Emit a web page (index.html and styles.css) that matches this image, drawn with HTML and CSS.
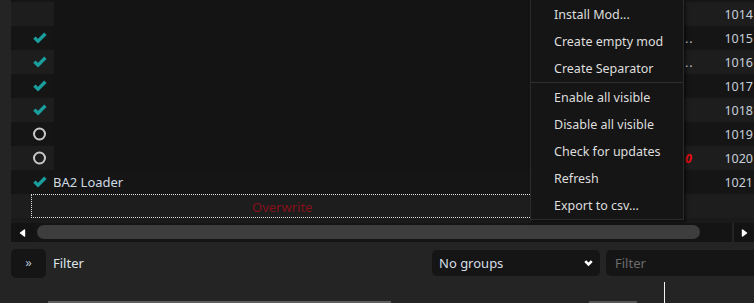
FILE: index.html
```html
<!DOCTYPE html>
<html>
<head>
<meta charset="utf-8">
<link rel="stylesheet" href="styles.css">
</head>
<body>
<div class="app">
  <div class="table">
    <div class="row dark partial"><div class="cell"></div><div class="cell"></div><div class="cell blank"></div><div class="cell"></div><div class="cell"></div></div>
    <div class="row light"><div class="cell"></div><div class="cell"></div><div class="cell blank"></div><div class="cell"></div><div class="cell num">1014</div></div>
    <div class="row dark"><div class="cell"></div><div class="cell check"><svg width="14" height="12" viewBox="0 0 14 12"><path d="M1.4 5.6 L5 9.2 L12.4 1.8" fill="none" stroke="#1a9d9d" stroke-width="3.4"/></svg></div><div class="cell blank"></div><div class="cell flag">..</div><div class="cell num">1015</div></div>
    <div class="row light"><div class="cell"></div><div class="cell check"><svg width="14" height="12" viewBox="0 0 14 12"><path d="M1.4 5.6 L5 9.2 L12.4 1.8" fill="none" stroke="#1a9d9d" stroke-width="3.4"/></svg></div><div class="cell blank"></div><div class="cell flag">..</div><div class="cell num">1016</div></div>
    <div class="row dark"><div class="cell"></div><div class="cell check"><svg width="14" height="12" viewBox="0 0 14 12"><path d="M1.4 5.6 L5 9.2 L12.4 1.8" fill="none" stroke="#1a9d9d" stroke-width="3.4"/></svg></div><div class="cell blank"></div><div class="cell"></div><div class="cell num">1017</div></div>
    <div class="row light"><div class="cell"></div><div class="cell check"><svg width="14" height="12" viewBox="0 0 14 12"><path d="M1.4 5.6 L5 9.2 L12.4 1.8" fill="none" stroke="#1a9d9d" stroke-width="3.4"/></svg></div><div class="cell blank"></div><div class="cell"></div><div class="cell num">1018</div></div>
    <div class="row dark"><div class="cell"></div><div class="cell check"><svg width="14" height="14" viewBox="0 0 14 14"><circle cx="6.5" cy="7" r="5.5" fill="none" stroke="#c9c9c9" stroke-width="2"/></svg></div><div class="cell blank"></div><div class="cell"></div><div class="cell num">1019</div></div>
    <div class="row light"><div class="cell"></div><div class="cell check"><svg width="14" height="14" viewBox="0 0 14 14"><circle cx="6.5" cy="7" r="5.5" fill="none" stroke="#c9c9c9" stroke-width="2"/></svg></div><div class="cell blank"></div><div class="cell flag red">0</div><div class="cell num">1020</div></div>
    <div class="row dark"><div class="cell"></div><div class="cell check"><svg width="14" height="12" viewBox="0 0 14 12"><path d="M1.4 5.6 L5 9.2 L12.4 1.8" fill="none" stroke="#1a9d9d" stroke-width="3.4"/></svg></div><div class="cell name">BA2 Loader</div><div class="cell"></div><div class="cell num">1021</div></div>
    <div class="row light"><div class="cell"></div><div class="cell overwrite">Overwrite</div><div class="cell"></div><div class="cell"></div></div>
  </div>

  <div class="hscroll">
    <div class="sbtn"><svg width="7" height="8" viewBox="0 0 7 8"><path d="M5.5 1 L1.5 4 L5.5 7 Z" fill="#fff" stroke="#fff" stroke-width="1.4" stroke-linejoin="round"/></svg></div>
    <div class="track"><div class="thumb"></div></div>
    <div class="sbtn right"><svg width="7" height="8" viewBox="0 0 7 8"><path d="M1.5 1 L5.5 4 L1.5 7 Z" fill="#fff" stroke="#fff" stroke-width="1.4" stroke-linejoin="round"/></svg></div>
  </div>

  <div class="filterbar">
    <div class="toggle">»</div>
    <div class="flabel">Filter</div>
    <div class="combo"><span>No groups</span><svg width="9" height="7" viewBox="0 0 9 7"><path d="M0.3 2 L2.2 0.3 L4.5 2.4 L6.8 0.3 L8.7 2 L4.5 6.2 Z" fill="#fff"/></svg></div>
    <div class="finput">Filter</div>
  </div>

  <div class="bottom">
    <div class="b1"></div>
    <div class="b2"></div>
    <div class="caret"></div>
  </div>

  <div class="menu">
    <div class="mi">Install Mod...</div>
    <div class="mi">Create empty mod</div>
    <div class="mi">Create Separator</div>
    <div class="msep"></div>
    <div class="mi">Enable all visible</div>
    <div class="mi">Disable all visible</div>
    <div class="mi">Check for updates</div>
    <div class="mi">Refresh</div>
    <div class="mi">Export to csv...</div>
  </div>
</div>
</body>
</html>
```

FILE: styles.css
```css
* { box-sizing: border-box; }
html, body {
  margin: 0;
  padding: 0;
  width: 754px;
  height: 303px;
  overflow: hidden;
  background: #242424;
}
body {
  font-family: "Noto Sans", "Open Sans", sans-serif;
  font-size: 12.5px;
  color: #dcdcdc;
}
.app {
  position: relative;
  width: 754px;
  height: 303px;
  overflow: hidden;
}

/* table */
.table {
  margin-left: 11px;
  width: 743px;
}
.row {
  display: grid;
  grid-template-columns: 20px 23px 630px 16px 54px;
  height: 24px;
}
.row.partial { height: 2px; }
.row.light { background: #1d1d1d; }
.row.dark { background: #151515; }
.cell {
  display: flex;
  align-items: center;
  overflow: hidden;
  white-space: nowrap;
}
.blank { background: #141414; }
.check { padding-left: 2px; }
.num {
  justify-content: flex-end;
  padding-right: 1px;
  color: #c8d0d9;
  padding-top: 1px;
}
.flag {
  padding-left: 1px;
  color: #c4c4c4;
  letter-spacing: 1px;
  padding-top: 1px;
}
.flag.red {
  color: #e50c12;
  font-style: italic;
  font-weight: bold;
  letter-spacing: 0;
}
.name {
  color: #cfd9e2;
  text-indent: -1px;
  font-size: 13px;
}
.overwrite {
  grid-column: 2 / 4;
  border: 1px dotted #e2e2e2;
  color: #85101a;
  padding-left: 220px;
  padding-top: 1px;
  font-size: 13px;
}

/* horizontal scrollbar */
.hscroll {
  margin-left: 11px;
  height: 24px;
  padding-top: 5px;
  background: #1a1a1a;
  display: flex;
}
.sbtn {
  width: 23px;
  height: 19px;
  background: #131313;
  display: flex;
  align-items: center;
  justify-content: center;
}
.sbtn.right {
  width: 22px;
  border-left: 2px solid #242424;
  padding-left: 1px;
}
.track {
  flex: 1;
  height: 19px;
  padding: 2px 0 0 3px;
  background: #141414;
}
.thumb {
  width: 663px;
  height: 14px;
  border-radius: 7px;
  background: #3d3d3d;
}

/* filter bar */
.filterbar {
  display: flex;
  align-items: center;
  width: 766px;
  height: 30px;
  margin-top: 6px;
  padding-left: 11px;
}
.toggle {
  width: 35px;
  height: 29px;
  border-radius: 5px;
  background: #151515;
  color: #a9bccb;
  display: flex;
  align-items: center;
  justify-content: center;
  font-size: 13px;
  padding-bottom: 2px;
}
.flabel {
  flex: 1;
  padding-left: 7px;
  color: #dfe4ea;
  font-size: 13px;
}
.combo {
  width: 168px;
  height: 26px;
  border-radius: 5px;
  background: #151515;
  display: flex;
  align-items: center;
  justify-content: space-between;
  padding: 0 7px 0 7px;
  color: #d6dee6;
  font-size: 13px;
}
.finput {
  width: 160px;
  height: 26px;
  margin-left: 6px;
  border-radius: 5px;
  background: #151515;
  padding-left: 9px;
  color: #6c6c6c;
  display: flex;
  align-items: center;
  font-size: 13px;
}

/* bottom strip */
.bottom {
  height: 25px;
  display: flex;
  align-items: flex-end;
}
.b1 {
  margin-left: 48px;
  width: 343px;
  height: 2px;
  background: #5e5e5e;
}
.b2 {
  margin-left: 198px;
  width: 48px;
  height: 2px;
  background: #555555;
}
.caret {
  margin-left: 27px;
  width: 1px;
  height: 21px;
  background: #f2f2f2;
}

/* context menu */
.menu {
  position: absolute;
  left: 530px;
  top: 0;
  width: 154px;
  padding-top: 1px;
  background: #151515;
  border: 1px solid #2b2b2b;
  border-top: 0;
  box-shadow: 2px 2px 3px rgba(0, 0, 0, 0.55);
}
.mi {
  height: 27px;
  line-height: 27px;
  padding-left: 23px;
  color: #dedede;
  white-space: nowrap;
}
.msep {
  height: 1px;
  background: #2e2e2e;
  margin-bottom: 1px;
}
```
